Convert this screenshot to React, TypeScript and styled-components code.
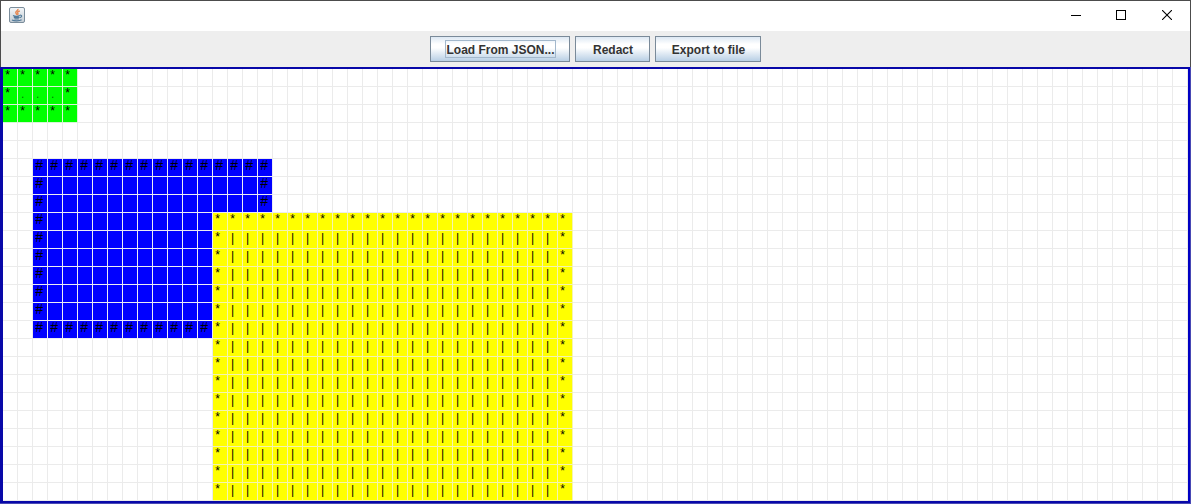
import React from 'react';
import styled, { createGlobalStyle } from 'styled-components';

const GlobalStyle = createGlobalStyle`
  * { box-sizing: border-box; }
  body { margin: 0; overflow: hidden; background: #fff; }
`;

const Window = styled.div`
  width: 1191px;
  height: 504px;
  display: flex;
  flex-direction: column;
  background: #4848b4;
  overflow: hidden;
`;

const Chrome = styled.div`
  border: 1px solid #4c4c4c;
  border-bottom: 0;
  height: 67px;
  flex: none;
`;

const TitleBar = styled.header`
  height: 30px;
  background: #fff;
  display: flex;
  justify-content: space-between;
  padding-left: 8px;
`;

const AppIcon = styled.svg`
  display: block;
  margin-top: 6px;
`;

const Controls = styled.div`
  display: flex;
  padding-right: 1px;
`;

const Control = styled.button`
  width: 45px;
  height: 28px;
  padding: 0;
  border: 0;
  background: none;
  display: flex;
  align-items: center;
  justify-content: center;

  &:last-child { margin-left: 1px; }
`;

const Toolbar = styled.div`
  height: 36px;
  background: #eee;
  display: flex;
  justify-content: center;
  gap: 5px;
  padding-top: 5px;
`;

const SwingButton = styled.button<{ $width: number }>`
  width: ${(p) => p.$width}px;
  height: 26px;
  padding: 0 0 0 1px;
  border: 1px solid #7a8a99;
  background: linear-gradient(#dde8f3 0%, #ffffff 30%, #ffffff 45%, #b8cfe5 100%);
  color: #333;
  font: bold 12px/18px 'Liberation Sans', Arial, sans-serif;
  white-space: nowrap;
  display: flex;
  align-items: center;
  justify-content: center;
`;

const Label = styled.span<{ $focused?: boolean }>`
  border: 1px solid ${(p) => (p.$focused ? '#a3b8cc' : 'transparent')};
  height: 18px;
`;

const Canvas = styled.main`
  height: 436px;
  flex: none;
  width: 1190px;
  border: 2px solid #0808a8;
  border-left: 3px solid #0808a8;
  border-right-color: #0000c4;
  background: #fff;
  display: grid;
  grid-template-columns: repeat(79, 15px);
  grid-auto-rows: 18px;
  overflow: hidden;
`;

const Cell = styled.span<{ $fill: string; $line: string }>`
  background: ${(p) => p.$fill};
  border-right: 1px solid ${(p) => p.$line};
  border-bottom: 1px solid ${(p) => p.$line};
  overflow: hidden;
`;

const Glyph = styled.span<{ $char: string }>`
  display: block;
  opacity: ${(p) => (p.$char === '.' ? 0.6 : 0.99)};
  color: #000;
  font-family: 'Liberation Mono', 'Courier New', monospace;
  font-size: ${(p) => (p.$char === '#' ? 14 : p.$char === '.' ? 9 : 12)}px;
  line-height: 15px;
  padding-left: ${(p) => (p.$char === '.' ? 2 : p.$char === '#' ? 2 : 1)}px;
  padding-top: ${(p) => (p.$char === '.' ? 2 : p.$char === '|' ? 1 : 0)}px;
`;

type Shape = {
  x: number;
  y: number;
  w: number;
  h: number;
  edge: string;
  inner: string;
  fill: string;
  line: string;
};

const shapes: Shape[] = [
  { x: 0, y: 0, w: 5, h: 3, edge: '*', inner: '.', fill: '#00ff00', line: '#d8f4d8' },
  { x: 2, y: 5, w: 16, h: 10, edge: '#', inner: '', fill: '#0000ff', line: '#ebebf4' },
  { x: 14, y: 8, w: 24, h: 20, edge: '*', inner: '|', fill: '#ffff00', line: '#f4f4b0' },
];

const COLS = 79;
const ROWS = 24;

function cellAt(col: number, row: number) {
  let result = { fill: '#fff', line: '#ebebeb', text: '' };
  for (const s of shapes) {
    const dx = col - s.x;
    const dy = row - s.y;
    if (dx < 0 || dy < 0 || dx >= s.w || dy >= s.h) continue;
    const onEdge = dx === 0 || dy === 0 || dx === s.w - 1 || dy === s.h - 1;
    result = { fill: s.fill, line: s.line, text: onEdge ? s.edge : s.inner };
  }
  return result;
}

export default function App() {
  return (
    <>
      <GlobalStyle />
      <Window>
        <Chrome>
          <TitleBar>
            <AppIcon width="16" height="16" viewBox="0 0 16 16">
              <defs>
                <linearGradient id="tile" x1="0" y1="0" x2="0" y2="1">
                  <stop offset="0" stopColor="#f4f7f9" />
                  <stop offset="1" stopColor="#c3ccd3" />
                </linearGradient>
              </defs>
              <rect x="0.5" y="0.5" width="15" height="15" rx="1.5" fill="url(#tile)" stroke="#7b8d9b" />
              <path d="M9 1.8C9.4 3.9 5.6 4.4 6.9 6.2L8 7.8M10.8 3.8C8.4 4.8 7.8 5.6 9 6.8L8.6 8" fill="none" stroke="#e58a55" strokeWidth="1.4" />
              <path d="M4 8.5C5.5 9.3 9 9.3 10.8 8.5M4.8 10.4H10.3M5.4 11.9H9.8M10.8 8.2C13.6 7.8 13 10.4 10.6 10.8M3 13C5 14.2 10.5 14.2 12.6 12.8" fill="none" stroke="#527a99" strokeWidth="1.1" />
            </AppIcon>
            <Controls>
              <Control aria-label="Minimize">
                <svg width="10" height="10"><path d="M0 5.5H10" stroke="#000" /></svg>
              </Control>
              <Control aria-label="Maximize">
                <svg width="10" height="10"><rect x="0.5" y="0.5" width="9" height="9" fill="none" stroke="#000" /></svg>
              </Control>
              <Control aria-label="Close">
                <svg width="10" height="10"><path d="M0 0L10 10M10 0L0 10" stroke="#000" strokeWidth="1.1" /></svg>
              </Control>
            </Controls>
          </TitleBar>
          <Toolbar>
            <SwingButton $width={140}><Label $focused>Load From JSON...</Label></SwingButton>
            <SwingButton $width={75}><Label>Redact</Label></SwingButton>
            <SwingButton $width={106}><Label>Export to file</Label></SwingButton>
          </Toolbar>
        </Chrome>
        <Canvas>
          {Array.from({ length: COLS * ROWS }, (_, i) => {
            const { fill, line, text } = cellAt(i % COLS, Math.floor(i / COLS));
            return (
              <Cell key={i} $fill={fill} $line={line}>
                {text && <Glyph $char={text}>{text}</Glyph>}
              </Cell>
            );
          })}
        </Canvas>
      </Window>
    </>
  );
}
